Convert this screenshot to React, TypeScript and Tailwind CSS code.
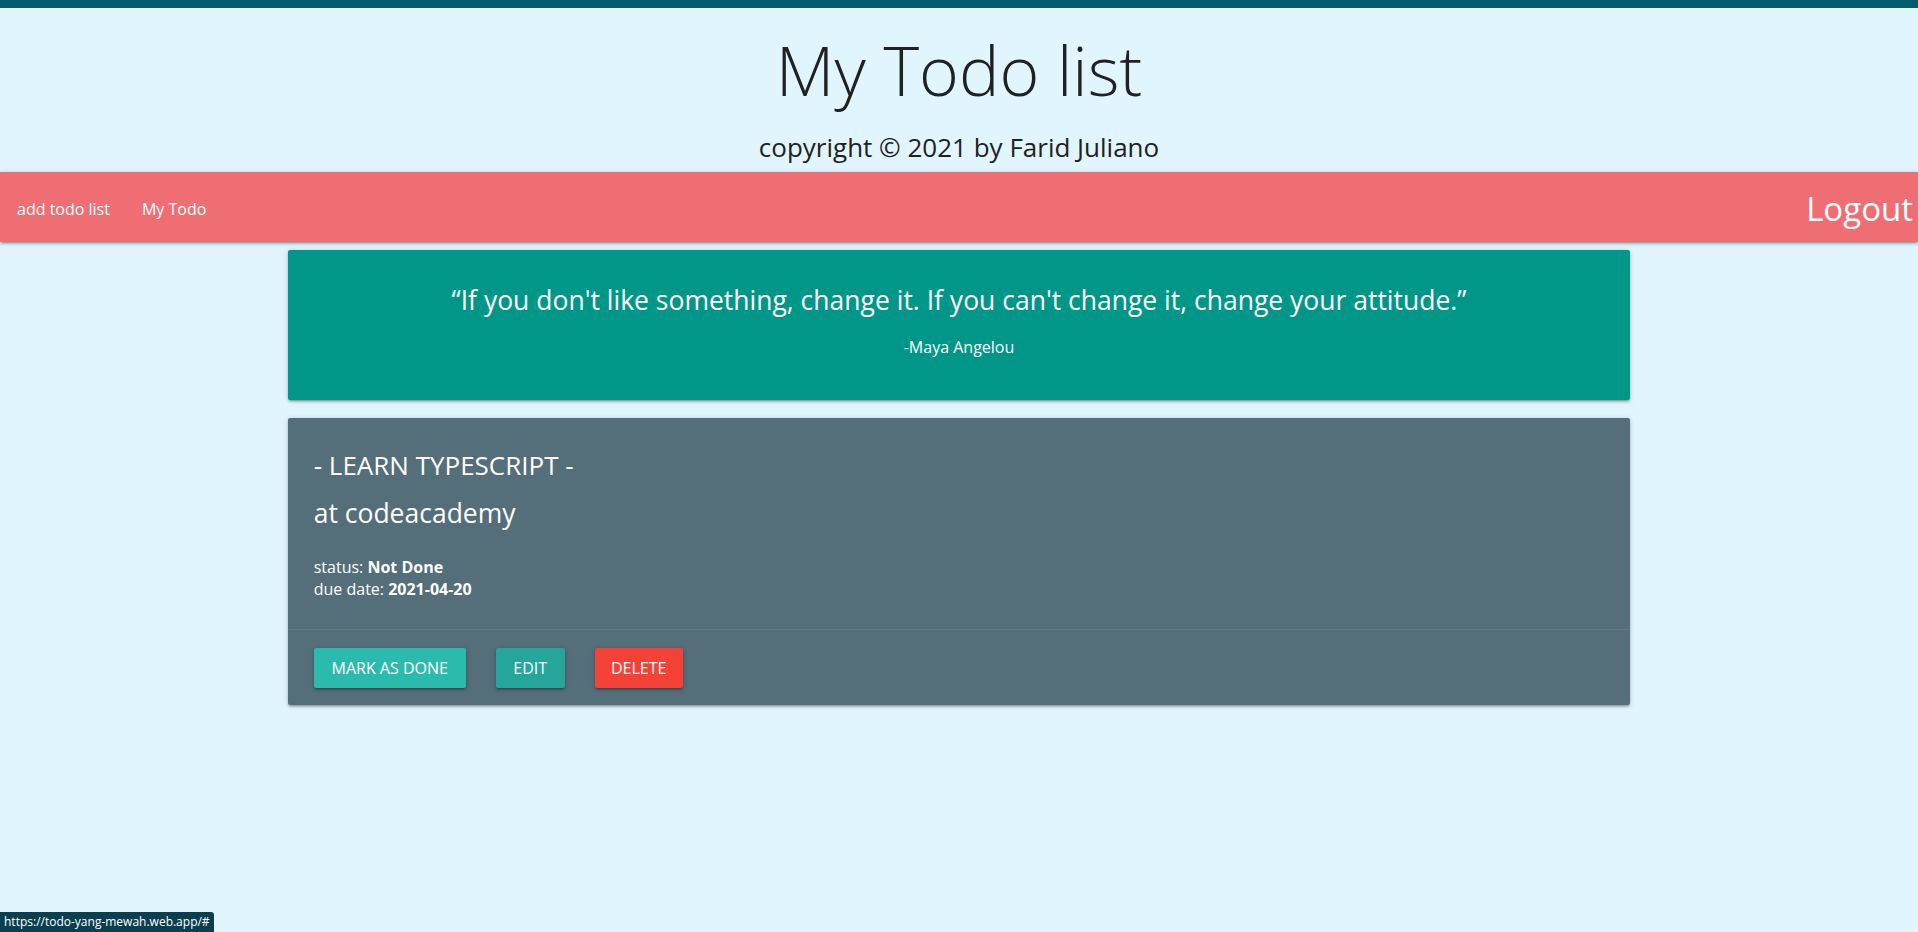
import React from "react";

const zDepth =
  "shadow-[0_2px_2px_0_rgba(0,0,0,0.14),0_3px_1px_-2px_rgba(0,0,0,0.12),0_1px_5px_0_rgba(0,0,0,0.2)]";

function Navbar() {
  return (
    <nav
      className={`h-[70px] bg-[#ef6e73] text-white flex items-center justify-between pt-[3px] ${zDepth}`}
    >
      <ul className="flex items-center pl-[2px]">
        <li>
          <a href="#" className="px-[15px] text-[16px]">
            add todo list
          </a>
        </li>
        <li>
          <a href="#" className="px-[17px] text-[16px]">
            My Todo
          </a>
        </li>
      </ul>
      <a href="#" className="text-[33px] pr-[5px] leading-none">
        Logout
      </a>
    </nav>
  );
}

function QuoteCard() {
  return (
    <div
      className={`bg-[#009688] text-white text-center rounded-[2px] pt-[34px] pb-[42px] ${zDepth}`}
    >
      <p className="text-[26.5px] leading-[32px]">
        “If you don't like something, change it. If you can't change it,
        change your attitude.”
      </p>
      <p className="text-[16px] leading-[22px] mt-5">-Maya Angelou</p>
    </div>
  );
}

function TodoCard() {
  const buttons = [
    { label: "MARK AS DONE", cls: "bg-[#2bbbad] w-[152px]" },
    { label: "EDIT", cls: "bg-[#26a69a] w-[69px]" },
    { label: "DELETE", cls: "bg-[#f44336] w-[88px]" },
  ];
  return (
    <div className={`bg-[#546e7a] text-white rounded-[2px] mt-[18px] ${zDepth}`}>
      <div className="px-[26px] pt-[31px] pb-[29px]">
        <h3 className="text-[26px] leading-[32px]">- LEARN TYPESCRIPT -</h3>
        <h4 className="text-[26.5px] leading-[32px] mt-[16px]">at codeacademy</h4>
        <div className="text-[16px] leading-[22px] mt-[27px]">
          <p>
            status: <b>Not Done</b>
          </p>
          <p>
            due date: <b>2021-04-20</b>
          </p>
        </div>
      </div>
      <div className="border-t border-[rgba(160,160,160,0.2)] px-[26px] pt-[18px] pb-[17px] flex gap-[30px]">
        {buttons.map((b) => (
          <button
            key={b.label}
            className={`h-10 text-[16px] text-white rounded-[2px] flex items-center justify-center ${b.cls} ${zDepth}`}
          >
            {b.label}
          </button>
        ))}
      </div>
    </div>
  );
}

export default function App() {
  return (
    <div
      className="min-h-[932px] bg-[#e0f5fd] relative"
      style={{ fontFamily: '"Open Sans", "Noto Sans", sans-serif' }}
    >
      <div className="h-2 bg-[#045b6d]" />
      <header className="text-center text-[#212121]">
        <h1 className="text-[68px] font-light leading-none mt-[28px]">
          My Todo list
        </h1>
        <p className="text-[26px] leading-none mt-[30px]">
          copyright © 2021 by Farid Juliano
        </p>
      </header>
      <div className="mt-[12px]">
        <Navbar />
      </div>
      <main className="w-[70%] mx-auto mt-2">
        <QuoteCard />
        <TodoCard />
      </main>
      {/* browser status bubble */}
      <div className="absolute left-0 bottom-0 bg-[#0b3f4f] text-white text-[12px] leading-[20px] px-[4px] rounded-tr-[3px]">
        https://todo-yang-mewah.web.app/#
      </div>
    </div>
  );
}
